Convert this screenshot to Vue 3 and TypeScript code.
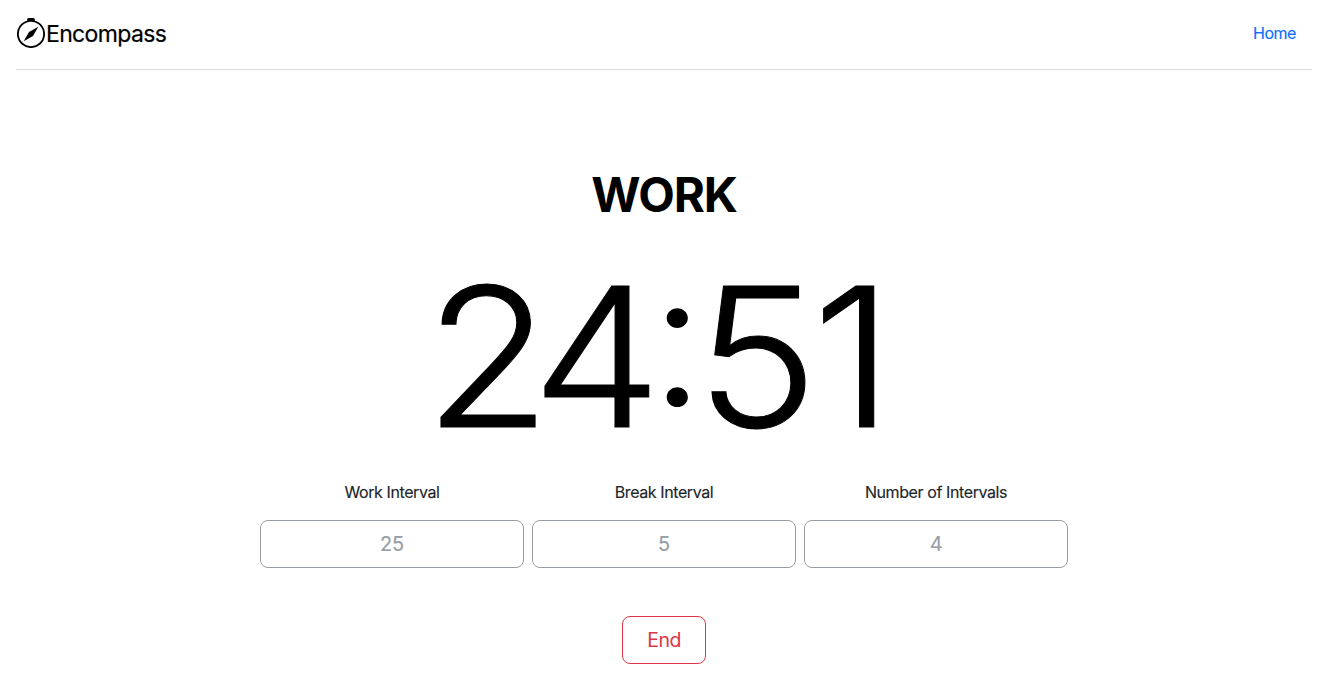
<script setup lang="ts">
interface Field {
  id: string
  label: string
  placeholder: string
}

const phase = 'WORK'
const remaining = '24:51'
const fields: Field[] = [
  { id: 'work', label: 'Work Interval', placeholder: '25' },
  { id: 'break', label: 'Break Interval', placeholder: '5' },
  { id: 'count', label: 'Number of Intervals', placeholder: '4' },
]
</script>

<template>
  <div class="page">
    <header class="header">
      <a class="brand">
        <svg class="logo" viewBox="0 0 16 16" fill="currentColor">
          <path d="M8 16.016a7.5 7.5 0 0 0 1.962-14.74A1 1 0 0 0 9 0H7a1 1 0 0 0-.962 1.276A7.5 7.5 0 0 0 8 16.016zm6.5-7.5a6.5 6.5 0 1 1-13 0 6.5 6.5 0 0 1 13 0z" />
          <path d="m6.94 7.44 4.95-2.83-2.83 4.95-4.949 2.83 2.828-4.95z" />
        </svg>
        <span class="brand-name">Encompass</span>
      </a>
      <nav class="nav"><a class="nav-link">Home</a></nav>
    </header>
    <main class="main">
      <h1 class="phase">{{ phase }}</h1>
      <div class="timer"><span v-for="(c, i) in remaining" :key="i" :class="'glyph-' + i">{{ c }}</span></div>
      <form class="fields" @submit.prevent>
        <div v-for="f in fields" :key="f.id" class="field">
          <label class="label" :for="f.id">{{ f.label }}</label>
          <input :id="f.id" class="input" type="text" :placeholder="f.placeholder" />
        </div>
      </form>
      <button class="end" type="button">End</button>
    </main>
  </div>
</template>

<style>
body {
  background: #fff;
}
</style>

<style scoped>
.page,
.page * {
  box-sizing: border-box;
}
.page {
  width: 1328px;
  height: 685px;
  padding: 16px;
  overflow: hidden;
  font-family: Inter, "Liberation Sans", sans-serif;
  font-size: 16px;
  line-height: 24px;
  color: #212529;
}
.header {
  display: flex;
  justify-content: space-between;
  height: 54px;
  border-bottom: 1px solid #d9dadc;
}
.brand {
  display: flex;
  align-items: center;
  height: 36px;
  color: #000;
}
.logo {
  width: 30px;
  height: 30px;
  margin-top: -2px;
}
.brand-name {
  font-size: 23px;
  line-height: 36px;
  letter-spacing: -0.65px;
  -webkit-text-stroke: 0.2px currentColor;
}
.nav {
  padding: 5px 16px;
}
.nav-link {
  color: #0d6efd;
  font-size: 16px;
  letter-spacing: -0.45px;
  -webkit-text-stroke: 0.15px currentColor;
}
.main {
  display: flex;
  flex-direction: column;
  align-items: center;
}
.phase {
  margin: 96px 0 0;
  color: #000;
  font-size: 47.5px;
  line-height: 58px;
  font-weight: 700;
  letter-spacing: -1.2px;
}
.timer {
  margin-top: 12px;
  height: 240px;
  color: #000;
  font-size: 194px;
  line-height: 240px;
  font-weight: 300;
  white-space: nowrap;
  transform: translate(-5.5px, 0.6px) scaleX(1.065);
  -webkit-text-stroke: 1px currentColor;
}
.glyph-0 {
  letter-spacing: -18px;
}
.glyph-1 {
  letter-spacing: -12px;
}
.glyph-2 {
  position: relative;
  top: -1px;
  font-size: 0.97em;
  letter-spacing: -9.5px;
  font-feature-settings: "case";
  -webkit-text-stroke: 0;
}
.glyph-3 {
  letter-spacing: -5.5px;
}
.fields {
  display: flex;
  gap: 8px;
  width: 808px;
  margin-top: 4px;
}
.field {
  flex: 1;
  min-width: 0;
}
.label {
  display: block;
  height: 40px;
  text-align: center;
  letter-spacing: -0.4px;
  -webkit-text-stroke: 0.15px currentColor;
}
.input {
  display: block;
  width: 100%;
  height: 48px;
  padding: 8px 16px;
  border: 1px solid #989ca3;
  border-radius: 8px;
  outline: none;
  background: #fff;
  font-family: inherit;
  font-size: 20px;
  letter-spacing: -0.3px;
  text-align: center;
}
.input::placeholder {
  color: #989ea4;
  opacity: 1;
  -webkit-text-stroke: 0.2px currentColor;
}
.end {
  width: 84px;
  height: 48px;
  margin-top: 48px;
  padding: 0;
  border: 1px solid #dc3545;
  border-radius: 8px;
  background: #fff;
  color: #dc3545;
  font-family: inherit;
  font-size: 19.5px;
  line-height: 30px;
  letter-spacing: -0.5px;
}
</style>
